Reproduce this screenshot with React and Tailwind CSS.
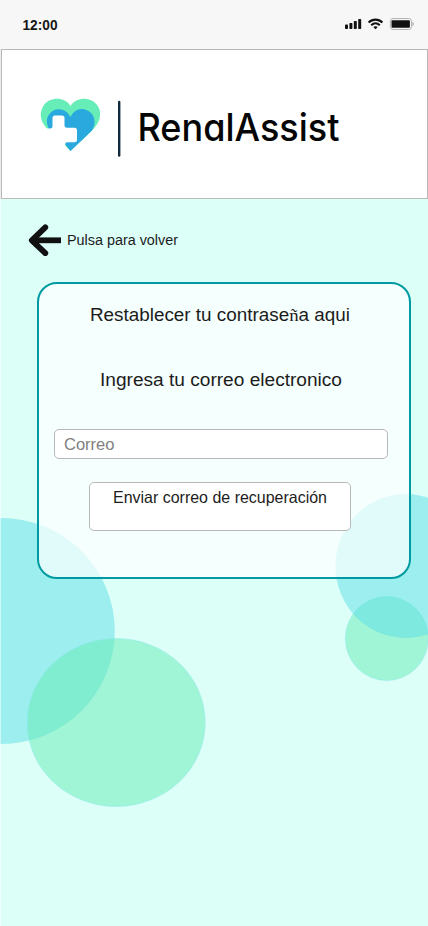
function StatusBar() {
  return (
    <header className="flex h-[49px] items-center justify-between bg-[#f7f7f7] pl-[22px] pr-[14px]">
      <svg width="40" height="20" className="overflow-visible">
        <text x="0.5" y="15" textLength="35" lengthAdjust="spacingAndGlyphs" fill="#161616" className="text-[14px] font-bold">12:00</text>
      </svg>
      <svg className="mb-0.5" width="70" height="14" viewBox="344 17 70 14" fill="#111">
        <rect x="345" y="24.5" width="3" height="4.5" rx=".8" />
        <rect x="349.4" y="23" width="3" height="6" rx=".8" />
        <rect x="353.8" y="21" width="3" height="8" rx=".8" />
        <rect x="358.2" y="19" width="3" height="10" rx=".8" />
        <g fill="none" stroke="#111" strokeWidth="2.1">
          <path d="M368.6 22.6 C372.6 18.6 378.4 18.6 382.4 22.6" />
          <path d="M371.2 25.3 C373.8 22.8 377.2 22.8 379.8 25.3" />
        </g>
        <path d="M375.5 29.3 L373.3 27.1 Q375.5 25.2 377.7 27.1Z" />
        <rect x="390.3" y="18.5" width="21.2" height="11" rx="2.8" fill="#f4f4f4" stroke="#b4b4b4" />
        <rect x="391.5" y="20.2" width="18.4" height="7.6" rx="1" />
        <path d="M412.3 22 Q414 22.4 414 24 Q414 25.6 412.3 26Z" fill="#b4b4b4" />
      </svg>
    </header>
  );
}

function Brand() {
  return (
    <div className="bg-[#ececec] pl-px">
      <div className="flex h-[150px] items-start border border-[#b9b9b9] bg-white pt-[47px] pl-[37px]">
        <svg className="shrink-0" width="84" height="62" viewBox="39 97 84 62">
          <path d="M70.5 106 C65 96.5 50 96.5 44 105 C38.500 113 40.500 121 46 127.500 L70.5 151 L92.500 130 C101 121.500 102 112 97.500 105.500 C91 96.500 76.500 96.500 70.5 106Z" fill="#67edb7" />
          <path d="M70.5 117 C66 108 54.500 106.500 49 114.500 C46 119 46.500 124 49 129 L65 144 L70.5 151 L91.500 131 C96 125 95.500 117 90.500 112.500 C84 106.500 74.500 108 70.5 117Z" fill="#2aa9de" />
          <path d="M44 128.500 H50 Q52.500 128.500 52.500 126 V118 Q52.500 115.500 55 115.500 H62 Q64.500 115.500 64.500 118 V125 Q64.500 127.800 67 127.800 H74.500 Q77 127.800 77 130.300 V139.500 Q77 142.300 74.500 142.300 H67.500 Q65 142.300 65 144.500 Q65 146 66.500 147.200 L65 151 L44 134Z" fill="#fff" />
          <path d="M119.200 102 V155.500" stroke="#102b3d" strokeWidth="2.400" strokeLinecap="round" />
        </svg>
        <svg className="shrink-0 overflow-visible" width="220" height="62" viewBox="123 97 220 62">
          <text x="137.5" y="140.5" textLength="202" lengthAdjust="spacingAndGlyphs" fill="#050505" className="text-[38px] font-medium [font-family:Inter,sans-serif] [font-feature-settings:'cv11'_1]">RenalAssist</text>
        </svg>
      </div>
    </div>
  );
}

function Backdrop() {
  return (
    <svg className="pointer-events-none absolute inset-0" width="428" height="926" viewBox="0 0 428 926">
      <ellipse cx="1" cy="631" rx="113.800" ry="113" fill="#5cdde6" fillOpacity=".5" />
      <ellipse cx="116.200" cy="722.500" rx="89" ry="84" fill="#63ebb4" fillOpacity=".5" stroke="#8feaf0" strokeOpacity=".5" />
      <ellipse cx="386.800" cy="638.500" rx="41.500" ry="42" fill="#63ebb4" fillOpacity=".5" stroke="#8feaf0" strokeOpacity=".5" />
      <ellipse cx="405.500" cy="566" rx="70" ry="72" fill="#5cdde6" fillOpacity=".5" />
      <path d="M.5 199 V926" stroke="#fff" strokeOpacity=".5" />
    </svg>
  );
}

function TextLine({ children, width, size, color = "#1c1c1c" }) {
  return (
    <svg width={width} height="26" className="block shrink-0 overflow-visible">
      <text x="0" y="19" textLength={width} lengthAdjust="spacingAndGlyphs" fill={color} fontSize={size}>{children}</text>
    </svg>
  );
}

export default function App() {
  return (
    <div className="relative isolate h-[926px] w-[428px] overflow-hidden bg-[#dcfff8] [font-family:'Liberation_Sans',Arial,sans-serif]">
      <div className="absolute inset-0 -z-10"><Backdrop /></div>
      <StatusBar />
      <Brand />
      <main>
        <button className="mt-[25px] ml-7 flex h-8 items-center gap-[5px]">
          <svg width="34" height="32" viewBox="28 224 34 32" fill="none" stroke="#111" strokeWidth="5.8">
            <path d="M45.300 227.300 L31.800 240.300 L45.300 253.200" strokeLinecap="round" strokeLinejoin="round" />
            <path d="M32 240.300 H61" strokeWidth="5.800" />
          </svg>
          <span className="mb-0.5"><TextLine width={111} size="14">Pulsa para volver</TextLine></span>
        </button>
        <form className="mt-[26px] ml-[37px] flex h-[297px] w-[374px] flex-col rounded-[20px] border-2 border-[#009aa2] bg-white/70">
          <h1 className="mt-[18px] ml-[51px]">
            <svg width="262" height="26" className="block overflow-visible" fill="#1c1c1c" fontSize="17.5">
              <text x="0" y="19" textLength="260" lengthAdjust="spacingAndGlyphs">Restablecer tu contrase<tspan className="[font-family:'Liberation_Serif',serif]">ñ</tspan>a aqui</text>
            </svg>
          </h1>
          <label className="mt-[39px] ml-[61px]"><TextLine width={242} size="17.5">Ingresa tu correo electronico</TextLine></label>
          <input aria-label="Correo" placeholder="Correo" className="mt-[36px] ml-[15px] h-[30px] w-[334px] shrink-0 rounded-[5px] border border-[#b8b8b8] bg-white px-[9px] text-[16.5px] text-[#808080] outline-none placeholder:text-[#808080]" />
          <button type="button" className="mt-[23px] ml-[50px] flex h-[49px] w-[262px] shrink-0 items-start justify-center rounded-[5px] border border-[#b8b8b8] bg-white pt-px">
            <TextLine width={214} size="16.5">Enviar correo de recuperación</TextLine>
          </button>
        </form>
      </main>
    </div>
  );
}
